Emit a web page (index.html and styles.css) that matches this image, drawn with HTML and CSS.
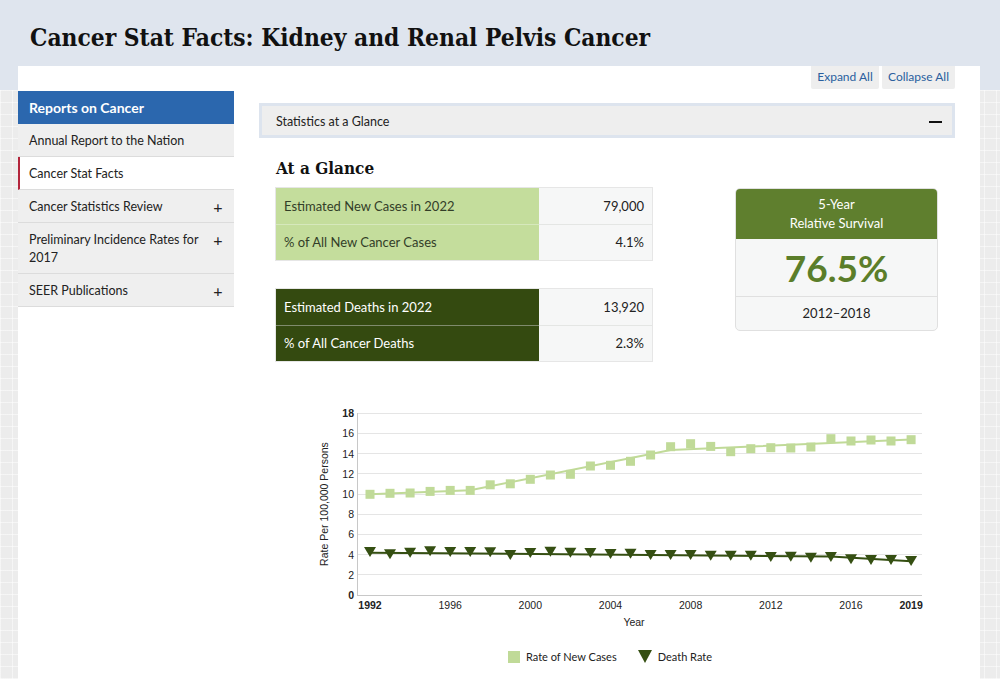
FILE: index.html
```html
<!DOCTYPE html>
<html lang="en">
<head>
<meta charset="utf-8">
<title>Cancer Stat Facts: Kidney and Renal Pelvis Cancer</title>
<link rel="stylesheet" href="styles.css">
</head>
<body>
<header class="banner">
  <h1 class="title">Cancer Stat Facts: Kidney and Renal Pelvis Cancer</h1>
</header>
<div class="page">
  <div class="toolbar">
    <button class="tbtn expand">Expand All</button>
    <button class="tbtn collapse">Collapse All</button>
  </div>
  <div class="layout">
    <nav class="sidebar">
      <div class="side-head">Reports on Cancer</div>
      <ul class="side-list">
        <li class="side-item"><span>Annual Report to the Nation</span></li>
        <li class="side-item active"><span>Cancer Stat Facts</span></li>
        <li class="side-item"><span>Cancer Statistics Review</span><span class="plus">+</span></li>
        <li class="side-item"><span>Preliminary Incidence Rates for 2017</span><span class="plus">+</span></li>
        <li class="side-item"><span>SEER Publications</span><span class="plus">+</span></li>
      </ul>
    </nav>
    <main class="main">
      <div class="acc-head"><span>Statistics at a Glance</span><span class="minus"></span></div>
      <section class="glance">
        <h2 class="glance-title">At a Glance</h2>
        <div class="glance-row">
          <div class="tables">
            <table class="stat light">
              <tr><td class="lbl">Estimated New Cases in 2022</td><td class="val">79,000</td></tr>
              <tr><td class="lbl">% of All New Cancer Cases</td><td class="val">4.1%</td></tr>
            </table>
            <table class="stat dark">
              <tr><td class="lbl">Estimated Deaths in 2022</td><td class="val">13,920</td></tr>
              <tr><td class="lbl">% of All Cancer Deaths</td><td class="val">2.3%</td></tr>
            </table>
          </div>
          <div class="survival">
            <div class="surv-head">5-Year<br>Relative Survival</div>
            <div class="surv-body">76.5%</div>
            <div class="surv-foot">2012–2018</div>
          </div>
        </div>
        <svg class="chart" width="625" height="240" viewBox="0 0 625 240" xmlns="http://www.w3.org/2000/svg">
          <defs>
            <rect id="sq" x="-4.5" y="-4.5" width="9" height="9" fill="#c0da98"/>
            <path id="tri" d="M-6,-4.5 L6,-4.5 L0,5.5 Z" fill="#354f12"/>
          </defs>
          <g stroke="#e5e5e5" stroke-width="1">
            <line x1="47" y1="12.5" x2="612" y2="12.5"/>
            <line x1="47" y1="32.5" x2="612" y2="32.5"/>
            <line x1="47" y1="52.5" x2="612" y2="52.5"/>
            <line x1="47" y1="72.5" x2="612" y2="72.5"/>
            <line x1="47" y1="93.5" x2="612" y2="93.5"/>
            <line x1="47" y1="113.5" x2="612" y2="113.5"/>
            <line x1="47" y1="133.5" x2="612" y2="133.5"/>
            <line x1="47" y1="153.5" x2="612" y2="153.5"/>
            <line x1="47" y1="173.5" x2="612" y2="173.5"/>
          </g>
          <line x1="47" y1="194.5" x2="612" y2="194.5" stroke="#c8c8c8"/>
          <line x1="47.5" y1="12" x2="47.5" y2="195" stroke="#c8c8c8"/>
          <g font-family="Liberation Sans, Arial, sans-serif" font-size="10.5" fill="#222" text-anchor="end">
            <text x="44" y="198" font-weight="bold">0</text>
            <text x="44" y="177.5">2</text>
            <text x="44" y="157.5">4</text>
            <text x="44" y="137">6</text>
            <text x="44" y="117">8</text>
            <text x="44" y="97">10</text>
            <text x="44" y="76.5">12</text>
            <text x="44" y="56.5">14</text>
            <text x="44" y="36">16</text>
            <text x="44" y="16" font-weight="bold">18</text>
          </g>
          <g font-family="Liberation Sans, Arial, sans-serif" font-size="10.5" fill="#222" text-anchor="middle">
            <text x="60" y="208" font-weight="bold">1992</text>
            <text x="140.2" y="208">1996</text>
            <text x="220.3" y="208">2000</text>
            <text x="300.5" y="208">2004</text>
            <text x="380.6" y="208">2008</text>
            <text x="460.8" y="208">2012</text>
            <text x="541" y="208">2016</text>
            <text x="601.1" y="208" font-weight="bold">2019</text>
            <text x="324" y="225">Year</text>
            <text transform="translate(18,103) rotate(-90)">Rate Per 100,000 Persons</text>
          </g>
          <polyline points="60,93.3 160.2,89.3 360.6,49 601.1,38.5" fill="none" stroke="#c0da98" stroke-width="2"/>
          <g>
            <use href="#sq" x="60" y="93.3"/>
            <use href="#sq" x="80" y="92.3"/>
            <use href="#sq" x="100.1" y="92"/>
            <use href="#sq" x="120.1" y="90.4"/>
            <use href="#sq" x="140.2" y="89.4"/>
            <use href="#sq" x="160.2" y="89.4"/>
            <use href="#sq" x="180.2" y="83.8"/>
            <use href="#sq" x="200.3" y="82.8"/>
            <use href="#sq" x="220.3" y="78.3"/>
            <use href="#sq" x="240.4" y="74"/>
            <use href="#sq" x="260.4" y="73.3"/>
            <use href="#sq" x="280.4" y="65"/>
            <use href="#sq" x="300.5" y="64.3"/>
            <use href="#sq" x="320.5" y="60.3"/>
            <use href="#sq" x="340.6" y="54"/>
            <use href="#sq" x="360.6" y="45.7"/>
            <use href="#sq" x="380.6" y="42.7"/>
            <use href="#sq" x="400.7" y="45.4"/>
            <use href="#sq" x="420.7" y="50.7"/>
            <use href="#sq" x="440.8" y="47.7"/>
            <use href="#sq" x="460.8" y="46.7"/>
            <use href="#sq" x="480.8" y="47"/>
            <use href="#sq" x="500.9" y="46"/>
            <use href="#sq" x="520.9" y="37.7"/>
            <use href="#sq" x="541" y="40"/>
            <use href="#sq" x="561" y="39"/>
            <use href="#sq" x="581" y="40"/>
            <use href="#sq" x="601.1" y="38.7"/>
          </g>
          <polyline points="60,151.7 520.9,155.5 601.1,160.3" fill="none" stroke="#354f12" stroke-width="2"/>
          <g>
            <use href="#tri" x="60" y="150.5"/>
            <use href="#tri" x="80" y="152.8"/>
            <use href="#tri" x="100.1" y="151.2"/>
            <use href="#tri" x="120.1" y="149.8"/>
            <use href="#tri" x="140.2" y="150.5"/>
            <use href="#tri" x="160.2" y="150.5"/>
            <use href="#tri" x="180.2" y="150.8"/>
            <use href="#tri" x="200.3" y="153.5"/>
            <use href="#tri" x="220.3" y="151.5"/>
            <use href="#tri" x="240.4" y="150.2"/>
            <use href="#tri" x="260.4" y="151.2"/>
            <use href="#tri" x="280.4" y="151.5"/>
            <use href="#tri" x="300.5" y="152.5"/>
            <use href="#tri" x="320.5" y="152.2"/>
            <use href="#tri" x="340.6" y="153.5"/>
            <use href="#tri" x="360.6" y="153.5"/>
            <use href="#tri" x="380.6" y="153.5"/>
            <use href="#tri" x="400.7" y="154.2"/>
            <use href="#tri" x="420.7" y="154.2"/>
            <use href="#tri" x="440.8" y="154.2"/>
            <use href="#tri" x="460.8" y="155.5"/>
            <use href="#tri" x="480.8" y="155.2"/>
            <use href="#tri" x="500.9" y="156.2"/>
            <use href="#tri" x="520.9" y="155.5"/>
            <use href="#tri" x="541" y="157.8"/>
            <use href="#tri" x="561" y="158.5"/>
            <use href="#tri" x="581" y="158.5"/>
            <use href="#tri" x="601.1" y="159.5"/>
          </g>
        </svg>
        <div class="legend">
          <span class="leg-item"><span class="leg-sq"></span>Rate of New Cases</span>
          <span class="leg-item"><svg class="leg-tri" width="14" height="13" viewBox="0 0 14 13"><path d="M0,0 L14,0 L7,13 Z" fill="#354f12"/></svg>Death Rate</span>
        </div>
      </section>
    </main>
  </div>
</div>
</body>
</html>
```
FILE: styles.css
```css
* { box-sizing: border-box; }

html, body {
  margin: 0;
  padding: 0;
}

body {
  font-family: "Lato", "Open Sans", sans-serif;
  color: #222;
  min-height: 679px;
  background-color: #ececec;
  background-image:
    linear-gradient(#dfe5ee, #dfe5ee),
    repeating-linear-gradient(90deg, rgba(255,255,255,0.5) 0 1px, transparent 1px 12px),
    repeating-linear-gradient(0deg, rgba(255,255,255,0.5) 0 1px, transparent 1px 12px);
  background-size: 100% 90px, auto, auto;
  background-repeat: no-repeat, repeat, repeat;
  overflow: hidden;
}

.banner {
  height: 66px;
  padding: 22px 0 0 30px;
}

.title {
  margin: 0;
  font-family: "DejaVu Serif Condensed", "DejaVu Serif", "Liberation Serif", serif;
  font-stretch: condensed;
  font-weight: bold;
  font-size: 24.3px;
  line-height: 32px;
  color: #111;
}

.page {
  margin-left: 18px;
  width: 962px;
  min-height: 613px;
  background: #fff;
}

.toolbar {
  display: flex;
  justify-content: flex-end;
  gap: 3px;
  padding-right: 25px;
}

.tbtn {
  height: 23px;
  border: 0;
  border-radius: 0 0 2px 2px;
  background: #eeeeee;
  color: #2a5f9e;
  font-family: "Lato", sans-serif;
  font-size: 12px;
  padding: 0 0 2px 0;
  text-align: center;
  cursor: pointer;
}

.tbtn.expand { width: 68px; }
.tbtn.collapse { width: 73px; }

.layout {
  display: flex;
  align-items: flex-start;
}

.sidebar {
  width: 216px;
  margin-top: 2px;
  flex: none;
}

.side-head {
  height: 33px;
  background: #2b67ae;
  color: #fff;
  font-weight: bold;
  font-size: 14px;
  line-height: 33px;
  padding-left: 11px;
}

.side-list {
  list-style: none;
  margin: 0;
  padding: 0;
}

.side-item {
  display: flex;
  justify-content: space-between;
  align-items: flex-start;
  gap: 3px;
  padding: 8px 10px 6px 11px;
  line-height: 18px;
  font-size: 12.5px;
  background: #efefef;
  border-bottom: 1px solid #dcdcdc;
  color: #222;
}

.side-item.active {
  background: #fff;
  border-left: 2px solid #b3253c;
  padding-left: 9px;
}

.plus {
  font-size: 16px;
  width: 12px;
  text-align: center;
  flex: none;
  color: #222;
}

.main {
  width: 696px;
  margin-left: 25px;
  margin-top: 14px;
}

.acc-head {
  height: 35px;
  border: 3px solid #dde4ee;
  background: #eeeeee;
  display: flex;
  align-items: center;
  justify-content: space-between;
  padding: 2px 10px 0 14px;
  font-size: 12.5px;
  color: #222;
}

.minus {
  width: 13px;
  height: 2px;
  background: #111;
}

.glance {
  padding-left: 17px;
}

.glance-title {
  margin: 19px 0 8px 0;
  font-family: "DejaVu Serif Condensed", "DejaVu Serif", "Liberation Serif", serif;
  font-stretch: condensed;
  font-weight: bold;
  font-size: 17px;
  line-height: 23px;
  color: #111;
}

.glance-row {
  display: flex;
  align-items: flex-start;
}

.tables {
  width: 376px;
  flex: none;
}

.stat {
  width: 376px;
  border-collapse: collapse;
  font-size: 13px;
  box-shadow: 0 0 0 1px #e6e6e6;
}

.stat + .stat {
  margin-top: 29px;
}

.stat td {
  height: 36px;
  padding: 0 8px;
}

.stat .lbl {
  width: 263px;
}

.stat .val {
  text-align: right;
  background: #f6f7f7;
  color: #222;
}

.stat tr + tr td {
  border-top: 1px solid #e4e6e4;
}

.stat.light .lbl {
  background: #c4dd9c;
  color: #333d28;
}

.stat.light tr + tr .lbl {
  border-top-color: #d6e8bc;
}

.stat.dark .lbl {
  background: #344a10;
  color: #fff;
}

.stat.dark tr + tr .lbl {
  border-top-color: #7f8b6d;
}

.survival {
  width: 203px;
  margin-left: 83px;
  border: 1px solid #e0e0e0;
  border-radius: 5px;
  overflow: hidden;
  background: #f6f7f7;
  text-align: center;
}

.surv-head {
  height: 50px;
  background: #5f7f2e;
  color: #fff;
  font-size: 13px;
  line-height: 19px;
  padding-top: 6px;
}

.surv-body {
  height: 58px;
  font-size: 37px;
  font-weight: bold;
  line-height: 58px;
  color: #5b7e2a;
  border-bottom: 1px solid #e0e0e0;
}

.surv-foot {
  height: 33px;
  line-height: 33px;
  font-size: 13px;
  color: #222;
}

.chart {
  display: block;
  margin: 40px 0 0 34px;
}

.legend {
  display: flex;
  align-items: center;
  gap: 21px;
  margin: 9px 0 0 232px;
  font-size: 11px;
  color: #222;
}

.leg-item {
  display: flex;
  align-items: center;
  gap: 6px;
}

.leg-sq {
  width: 12px;
  height: 12px;
  background: #c0da98;
}

.leg-tri {
  display: block;
}
```
